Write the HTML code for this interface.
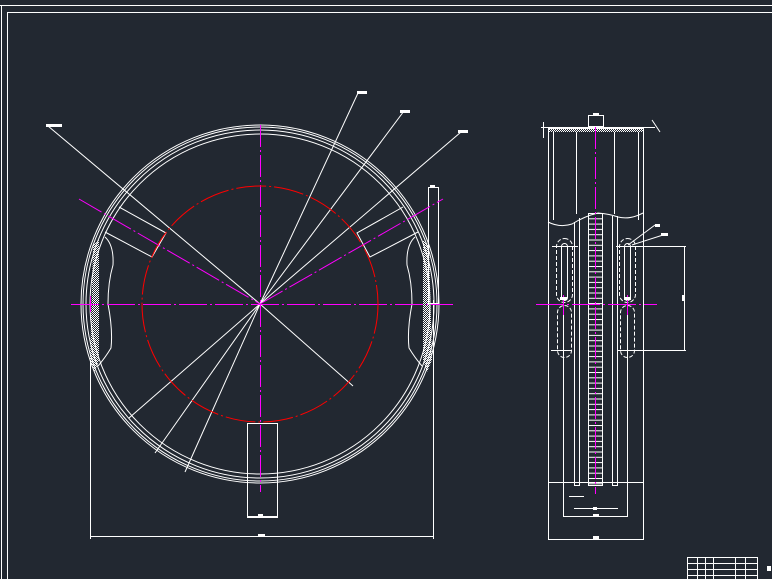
<!DOCTYPE html>
<html><head><meta charset="utf-8"><style>
html,body{margin:0;padding:0;background:#222831;width:772px;height:579px;overflow:hidden}
svg{display:block}
</style></head><body>
<svg width="772" height="579" viewBox="0 0 772 579" xmlns="http://www.w3.org/2000/svg">
<defs>
<pattern id="h" width="2" height="2" patternUnits="userSpaceOnUse"><rect width="1" height="1" fill="#fff"/><rect x="1" y="1" width="1" height="1" fill="#fff"/></pattern>
<pattern id="rk" width="14" height="5.3" patternUnits="userSpaceOnUse" x="588" y="213"><line x1="0" y1="0.5" x2="14" y2="0.5" stroke="#fff" stroke-width="1"/></pattern>
</defs>
<rect width="772" height="579" fill="#222831"/>
<g fill="none" stroke="#fff" stroke-width="1">
<polyline points="0,5.5 772,5.5"/>
<polyline points="1.5,5.5 1.5,579"/>
<polyline points="772,12.5 7.5,12.5 7.5,579"/>
<rect x="687.5" y="557.5" width="70" height="25"/>
<line x1="687" y1="563.5" x2="757" y2="563.5"/><line x1="687" y1="569.5" x2="757" y2="569.5"/><line x1="687" y1="575.5" x2="757" y2="575.5"/>
<line x1="697.5" y1="557" x2="697.5" y2="579"/><line x1="705.5" y1="557" x2="705.5" y2="579"/><line x1="713.5" y1="557" x2="713.5" y2="579"/><line x1="735.5" y1="557" x2="735.5" y2="579"/><line x1="745.5" y1="557" x2="745.5" y2="579"/>

<circle cx="260" cy="304" r="179"/>
<circle cx="260" cy="304" r="177"/>
<circle cx="260" cy="304" r="174"/>
<circle cx="260" cy="304" r="170"/>
<line x1="48" y1="126" x2="260" y2="304"/>
<line x1="260" y1="304" x2="353" y2="386"/>
<line x1="260" y1="304" x2="358" y2="93"/>
<line x1="260" y1="304" x2="404" y2="111"/>
<line x1="260" y1="304" x2="461" y2="132"/>
<line x1="260" y1="304" x2="129" y2="418"/>
<line x1="260" y1="304" x2="155" y2="453"/>
<line x1="260" y1="304" x2="185" y2="472"/>
<polyline points="119,207 166,233 152,257 105,232"/>
<polyline points="403,207 357,233 370,257 418,232"/>
<path d="M105,237 Q114,245 113,265 Q108,282 108,304 Q113,330 111,348 Q105,358 98,366"/>
<path d="M415,237 Q406,245 407,265 Q412,282 412,304 Q407,330 409,348 Q415,358 422,366"/>
<rect x="428.5" y="187.5" width="10" height="116"/>
<rect x="247.5" y="423.5" width="30" height="94"/>
<line x1="247" y1="516.5" x2="277" y2="516.5"/>
<line x1="90.5" y1="360" x2="90.5" y2="539"/>
<line x1="433.5" y1="300" x2="433.5" y2="539"/>
<line x1="90" y1="536.5" x2="434" y2="536.5"/>

<rect x="548.5" y="128.5" width="95" height="411"/>
<line x1="553.5" y1="132" x2="553.5" y2="220"/>
<line x1="576.5" y1="132" x2="576.5" y2="214"/>
<line x1="614.5" y1="132" x2="614.5" y2="214"/>
<line x1="638.5" y1="132" x2="638.5" y2="220"/>
<path d="M548,222 Q560,228 572,224 Q585,216 598,213 Q610,214 618,217 Q630,220 643,213"/>
<line x1="574.5" y1="222" x2="574.5" y2="485"/>
<line x1="579.5" y1="218" x2="579.5" y2="485"/>
<line x1="612.5" y1="216" x2="612.5" y2="485"/>
<line x1="617.5" y1="216" x2="617.5" y2="485"/>
<line x1="574" y1="485.5" x2="580" y2="485.5"/>
<line x1="612" y1="485.5" x2="618" y2="485.5"/>
<rect x="588.5" y="213.5" width="14" height="272"/>
<rect x="588.5" y="213.5" width="14" height="272" fill="url(#rk)" stroke="none"/>
<line x1="548" y1="482.5" x2="643" y2="482.5"/>
<line x1="563.5" y1="304" x2="563.5" y2="517"/>
<line x1="627.5" y1="304" x2="627.5" y2="517"/>
<line x1="574" y1="508.5" x2="618" y2="508.5"/>
<line x1="563" y1="516.5" x2="628" y2="516.5"/>
<line x1="569" y1="496.5" x2="584" y2="496.5"/>
<rect x="556.5" y="238.5" width="16" height="64" rx="8" stroke-dasharray="4,2"/>
<rect x="561.5" y="243.5" width="6" height="57" rx="3"/>
<rect x="557.5" y="305.5" width="14" height="52" rx="7" stroke-dasharray="4,2"/>
<rect x="619.5" y="238.5" width="16" height="64" rx="8" stroke-dasharray="4,2"/>
<rect x="624.5" y="243.5" width="6" height="57" rx="3"/>
<rect x="620.5" y="305.5" width="14" height="52" rx="7" stroke-dasharray="4,2"/>
<line x1="552" y1="246.5" x2="578" y2="246.5"/>
<line x1="551" y1="350.5" x2="572" y2="350.5"/>
<line x1="616" y1="246.5" x2="686" y2="246.5"/>
<line x1="618" y1="350.5" x2="686" y2="350.5"/>
<line x1="684.5" y1="246" x2="684.5" y2="351"/>
<line x1="628" y1="245" x2="655" y2="225"/>
<line x1="632" y1="245" x2="663" y2="235"/>
<rect x="588.5" y="115.5" width="15" height="11"/>
<line x1="541" y1="127.5" x2="655" y2="127.5"/>
<line x1="543.5" y1="122" x2="543.5" y2="138"/>
<line x1="652" y1="120" x2="660" y2="132"/>
</g>
<rect x="548" y="127" width="95" height="5" fill="url(#h)"/>
<path d="M93,245 L99,240 L99,360 L95,372 L90,360 Z" fill="url(#h)"/>
<path d="M429,245 L423,240 L423,360 L427,372 L432,360 Z" fill="url(#h)"/>
<g stroke="#ff00ff" stroke-width="1" fill="none">
<line x1="71" y1="304.5" x2="453" y2="304.5" stroke-dasharray="28,3,2,3"/>
<line x1="260.5" y1="125" x2="260.5" y2="492" stroke-dasharray="22,3,2,3"/>
<line x1="79" y1="199" x2="260" y2="304" stroke-dasharray="26,3,2,3"/>
<line x1="260" y1="304" x2="443" y2="199" stroke-dasharray="26,3,2,3"/>
<line x1="536" y1="304.5" x2="657" y2="304.5" stroke-dasharray="28,3,2,3"/>
<line x1="595.5" y1="127" x2="595.5" y2="494" stroke-dasharray="22,3,2,3"/>
<line x1="563.5" y1="295" x2="563.5" y2="315"/>
<line x1="627.5" y1="295" x2="627.5" y2="315"/>
<line x1="90.5" y1="296" x2="90.5" y2="312"/>
</g>
<circle cx="260" cy="304" r="118" fill="none" stroke="#ff0000" stroke-width="1" stroke-dasharray="30,3,2,3"/>
<g fill="#fff">
<rect x="46" y="124" width="16" height="3"/><rect x="357" y="91" width="10" height="3"/><rect x="400" y="110" width="10" height="3"/><rect x="458" y="130" width="10" height="3"/>
<rect x="258" y="514" width="5" height="3"/><rect x="258" y="534" width="7" height="3"/>
<rect x="593" y="113" width="6" height="3"/><rect x="655" y="224" width="5" height="3"/><rect x="661" y="233" width="7" height="3"/>
<rect x="682" y="295" width="3" height="6"/><rect x="593" y="507" width="4" height="3"/><rect x="593" y="514" width="6" height="3"/><rect x="593" y="536" width="6" height="3"/>
<rect x="560" y="297" width="7" height="3"/><rect x="624" y="297" width="7" height="3"/><rect x="430" y="185" width="5" height="3"/>
<rect x="767" y="566" width="4" height="5"/>
</g>
</svg>
</body></html>
